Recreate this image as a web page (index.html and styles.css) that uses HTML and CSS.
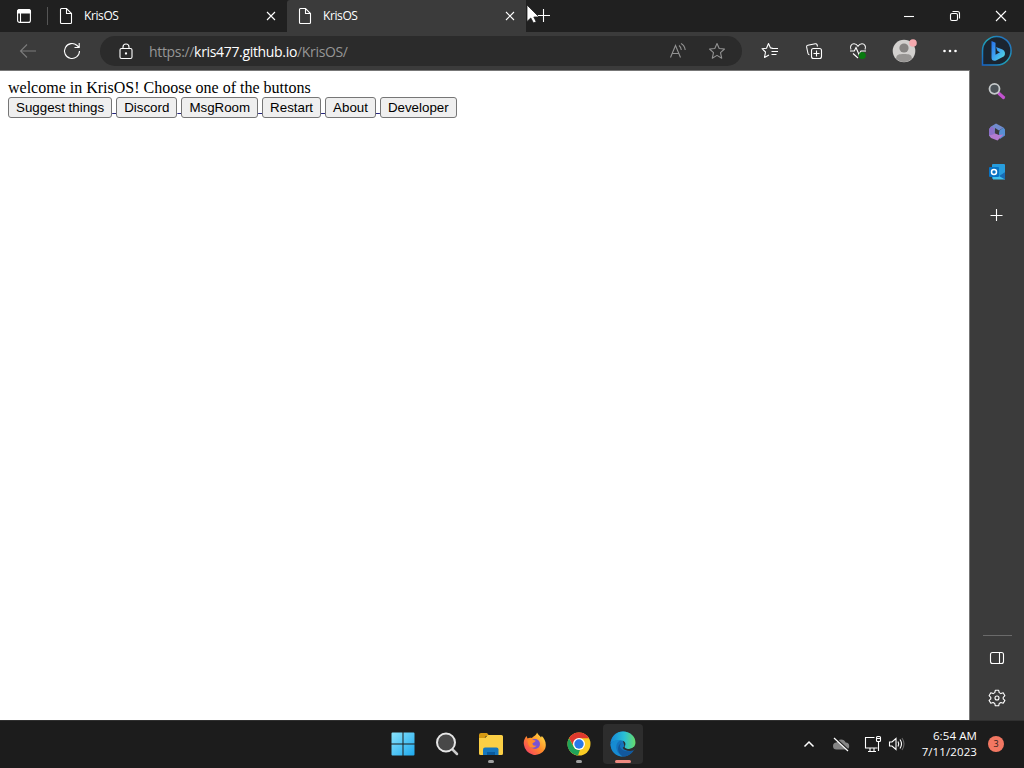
FILE: index.html
```html
<!DOCTYPE html>
<html lang="en">
<head>
    <meta charset="UTF-8">
    <meta name="viewport" content="width=device-width, initial-scale=1.0">
    <title>KrisOS</title>
    <link rel="stylesheet" href="styles.css">
</head>
<body>
    <div class="tabstrip">
        <div class="tab-menu">
            <svg class="icon" width="16" height="16" viewBox="0 0 16 16"><rect x="1.6" y="1.6" width="12.8" height="12.8" rx="2"/><path d="M1.5 3.5a2 2 0 0 1 2-2h9a2 2 0 0 1 2 2V5h-13z" fill="#fff"/><path d="M4.5 5v9"/></svg>
        </div>
        <div class="tab">
            <svg class="icon" width="14" height="18" viewBox="0 0 14 18"><path d="M1.5 2.5a1 1 0 0 1 1-1h5l5 5v9a1 1 0 0 1-1 1h-9a1 1 0 0 1-1-1zM7.5 1.5v5h5"/></svg>
            <span class="tab-title">KrisOS</span>
            <svg class="icon" width="10" height="10" viewBox="0 0 10 10"><path d="M1 1l8 8M9 1l-8 8"/></svg>
        </div>
        <div class="tab active">
            <svg class="icon" width="14" height="18" viewBox="0 0 14 18"><path d="M1.5 2.5a1 1 0 0 1 1-1h5l5 5v9a1 1 0 0 1-1 1h-9a1 1 0 0 1-1-1zM7.5 1.5v5h5"/></svg>
            <span class="tab-title">KrisOS</span>
            <svg class="icon" width="10" height="10" viewBox="0 0 10 10"><path d="M1 1l8 8M9 1l-8 8"/></svg>
        </div>
        <div class="new-tab">
            <svg class="icon" width="14" height="14" viewBox="0 0 14 14"><path d="M7.500 0v13M1 6.500h13"/></svg>
        </div>
        <div class="window-buttons">
            <svg class="icon" width="46" height="32" viewBox="0 0 46 32"><path d="M18 16.5h10"/></svg>
            <svg class="icon" width="46" height="32" viewBox="0 0 46 32"><rect x="18.5" y="13.5" width="7" height="7" rx="1.5"/><path d="M20.5 11.5h5a2 2 0 0 1 2 2v5"/></svg>
            <svg class="icon" width="46" height="32" viewBox="0 0 46 32"><path d="M18 11l10 10M28 11l-10 10"/></svg>
        </div>
    </div>

    <div class="main">
        <div class="view">
            <div class="toolbar">
                <div class="tool">
                    <svg class="icon back" width="18" height="16" viewBox="0 0 18 16"><path d="M17 8H1.5M8 1.5L1.5 8L8 14.5"/></svg>
                </div>
                <div class="tool">
                    <svg class="icon" width="18" height="18" viewBox="0 0 18 18"><path d="M16.5 9a7.5 7.5 0 1 1-2.4-5.5L16 5.3M16.2 1v4.5h-4.7"/></svg>
                </div>
                <div class="address">
                    <svg class="icon" width="14" height="17" viewBox="0 0 14 17"><rect x="1" y="5.5" width="12" height="10" rx="1.5"/><path d="M4 5.5V4a3 3 0 0 1 6 0v1.5"/><circle cx="7" cy="10.5" r=".6" fill="#fff"/></svg>
                    <span class="url">https://<b>kris477.github.io</b>/KrisOS/</span>
                    <svg class="icon dim" width="18" height="18" viewBox="0 0 18 18"><path d="M1.5 15.500L6.500 3.500L11.500 15.500M3.300 11.500h6.500M10 3.500q2 1.500 2.300 4.500M12 1.500q3.700 2 4.200 6.500"/></svg>
                    <svg class="icon dim" width="18" height="18" viewBox="0 0 18 18"><path d="M9 1.500l2.200 5 5.300.5-4 3.700 1.200 5.500L9 13.400l-4.700 2.800 1.200-5.500-4-3.700 5.300-.5z" stroke-linejoin="round"/></svg>
                </div>
                <div class="tool">
                    <svg class="icon" width="18" height="18" viewBox="0 0 18 18"><path d="M11.500 6L9.500 6L7.500 1.500L5.500 6.200L1 6.700L4.500 10L3.500 15.500L8 12.900M10.500 6.500H17M10.500 9.500h6.500M10.500 12.500h5" stroke-linejoin="round"/></svg>
                </div>
                <div class="tool">
                    <svg class="icon" width="18" height="18" viewBox="0 0 18 18"><rect x="6.500" y="6.500" width="10" height="10" rx="2"/><path d="M11.500 8.500v6M8.500 11.500h6M12.500 4.500l-.4-1.500a1.500 1.500 0 0 0-1.800-1.200L2.800 3.300A1.500 1.500 0 0 0 1.600 5L3 11.500a1.500 1.500 0 0 0 1.500 1.200"/></svg>
                </div>
                <div class="tool">
                    <svg class="icon" width="18" height="18" viewBox="0 0 18 18"><path d="M2 7.500C.5 4.500 2.500 1.800 5 1.800c1.900 0 3.200 1.200 4 2.400.8-1.200 2.100-2.400 4-2.400 2.500 0 4.500 2.700 3 5.700M1 9h4.300L7 5.500l3 7L12 9h5M4 11.500L9 16"/><circle cx="13.300" cy="13.400" r="3.500" fill="#087a10" stroke="none"/></svg>
                </div>
                <div class="tool profile">
                    <svg width="26" height="26" viewBox="0 0 26 26"><circle cx="13" cy="13" r="11.300" fill="#d2d0ce"/><circle cx="13" cy="10" r="4.600" fill="#858381"/><path d="M5 20.500C5.500 16.500 8 16 13 16s7.500.5 8 4.500a11 11 0 0 1-16 0z" fill="#979593"/><circle cx="22" cy="5" r="3.800" fill="#f4a9ae"/></svg>
                </div>
                <div class="tool more">
                    <svg width="16" height="4" viewBox="0 0 16 4" fill="#fff"><circle cx="3.500" cy="2" r="1.300"/><circle cx="9" cy="2" r="1.300"/><circle cx="14.500" cy="2" r="1.300"/></svg>
                </div>
            </div>

            <div class="page">
                welcome in KrisOS! Choose one of the buttons<br>
                <a href="#"><button>Suggest things</button> </a><a href="#"><button>Discord</button> </a><a href="#"><button>MsgRoom</button> </a><a href="#"><button>Restart</button> </a><a href="#"><button>About</button> </a><a href="#"><button>Developer</button></a>
            </div>
        </div>

        <div class="sidebar">
            <svg class="bing" width="32" height="32" viewBox="0 0 32 32">
                <defs>
                    <linearGradient id="ring" x1="0" y1="1" x2="1" y2="0"><stop offset="0" stop-color="#1764c8"/><stop offset=".5" stop-color="#20a4b5"/><stop offset="1" stop-color="#245fc0"/></linearGradient>
                    <linearGradient id="bee" x1="0" y1="0" x2="1" y2="1"><stop offset="0" stop-color="#2670e8"/><stop offset=".5" stop-color="#3fa5f2"/><stop offset="1" stop-color="#55e0d8"/></linearGradient>
                </defs>
                <path d="M1.500 30V16A14.300 14.300 0 1 1 16 30z" fill="#1b2530" stroke="url(#ring)" stroke-width="1.500"/>
                <path d="M10.500 6l4 1.700v12l4.500-2.500-2.500-1.200-1.500-4 6.500 2.500a4.300 4.300 0 0 1 1.200 7L15 25.500q-4.500 1-4.500-3z" fill="url(#bee)"/>
            </svg>
            <svg class="side-search" width="18" height="18" viewBox="0 0 18 18"><path d="M11 11.500l4.500 4" stroke="#c152cf" stroke-width="3.200" stroke-linecap="round"/><circle cx="6.500" cy="6.800" r="5" fill="#4c5358" stroke="#c5c9ca" stroke-width="1.800"/></svg>
            <svg class="side-office" width="18" height="18" viewBox="0 0 18 18"><path d="M3 3.500L8 .5l7.500 4-4.500 3-4-2.500-.5 8L1 13V6.500z" fill="#718bcd"/><path d="M15.500 4.500l1.500 2v6L12 16l-1-5.500.5-3z" fill="#578fd3"/><path d="M1 12.500l5.500-2.300L11 12l4.500-.5L9.500 17.500 3 15z" fill="#b47bcf"/><path d="M3 3.500L6.500 5v6L1 12.500V6z" fill="#8c70c8"/></svg>
            <svg class="side-outlook" width="18" height="18" viewBox="0 0 18 18"><rect x="4" y="1" width="13" height="15" rx="1" fill="#279ddd"/><path d="M5 9l6 4 6-4v7.500H5z" fill="#41c2ee"/><path d="M11 13l6-4v7.500z" fill="#176bb4"/><rect x="1" y="4" width="10" height="10" rx="1" fill="#0873c4"/><circle cx="6" cy="9" r="2.500" fill="none" stroke="#fff" stroke-width="1.500"/></svg>
            <svg class="icon side-add" width="14" height="14" viewBox="0 0 14 14"><path d="M6.500 1v12M.5 7.500h12"/></svg>
            <div class="side-bottom">
                <svg class="icon" width="16" height="14" viewBox="0 0 16 14"><rect x="1.500" y="1.500" width="13" height="11" rx="2"/><path d="M10.500 1.500v11"/></svg>
                <svg class="icon" width="18" height="18" viewBox="0 0 18 18"><path d="M7.300 1.300h3.400l.5 2.300 1.700 1 2.300-.8 1.700 2.900L15.200 8.300v1.600l1.700 1.500-1.700 2.900-2.300-.8-1.700 1-.5 2.300H7.300l-.5-2.300-1.700-1-2.300.8-1.700-2.900 1.700-1.500V8.300L1.100 6.700l1.700-2.900 2.300.8 1.700-1z" stroke-linejoin="round"/><circle cx="9" cy="9" r="2"/></svg>
            </div>
        </div>
    </div>

    <div class="taskbar">
        <div class="apps">
            <div class="app">
                <svg width="24" height="24" viewBox="0 0 24 24"><defs><linearGradient id="win" gradientUnits="userSpaceOnUse" x1="0" y1="0" x2="24" y2="24"><stop offset="0" stop-color="#8ce4fc"/><stop offset="1" stop-color="#1ba8ee"/></linearGradient></defs><path d="M.5 1.500a1 1 0 0 1 1-1h10v11H.5zM12.500.500h10a1 1 0 0 1 1 1v10h-11zM.5 12.500h11v11h-10a1 1 0 0 1-1-1zM12.500 12.500h11v10a1 1 0 0 1-1 1h-10z" fill="url(#win)"/></svg>
            </div>
            <div class="app">
                <svg width="24" height="24" viewBox="0 0 24 24"><path d="M17 17l5 5" stroke="#ccc" stroke-width="2.500" stroke-linecap="round"/><circle cx="11" cy="10.500" r="9" fill="#484848" stroke="#e5e5e5" stroke-width="2"/></svg>
            </div>
            <div class="app running">
                <svg width="26" height="24" viewBox="0 0 26 24"><path d="M1 3a2 2 0 0 1 2-2h6l2.500 3H8L6 7H1z" fill="#d69a12"/><path d="M1 6h6l3-3h13.500A1.500 1.500 0 0 1 25 4.500v17a1.500 1.500 0 0 1-1.500 1.500h-21A1.500 1.500 0 0 1 1 21.500z" fill="#fbcf45"/><path d="M5 23v-5.500a2 2 0 0 1 2-2h11.500a2 2 0 0 1 2 2V23z" fill="#1677be"/><path d="M9 23v-3h8v3z" fill="#095a9d"/></svg>
            </div>
            <div class="app">
                <svg width="24" height="24" viewBox="0 0 24 24"><defs><linearGradient id="fox" x1="1" y1="0" x2="0" y2="1"><stop offset="0" stop-color="#fff04c"/><stop offset=".5" stop-color="#ff8a28"/><stop offset="1" stop-color="#f52e72"/></linearGradient></defs><path d="M1 13C0 9 2 6 3.500 4l1 2.500C6 5.500 7.500 5.500 9 6c1.500-2 4-2 5-5.500 1 2 3 3.500 4 5l.8-1.500C22 7 24 12 22 17a11.200 11.200 0 0 1-21-4z" fill="url(#fox)"/><circle cx="12" cy="12" r="5" fill="#7953d2"/><path d="M4.500 8.500c2-1.500 4 0 6-.5l2 .5c0 2-3 2-3 3s1 3 4 2c-2 3-6 3-8-.5z" fill="#ff8b2b"/></svg>
            </div>
            <div class="app running">
                <svg width="24" height="24" viewBox="0 0 24 24"><circle cx="12" cy="12" r="11.500" fill="#f9cc24"/><path d="M2 6.200a11.500 11.500 0 0 1 20 0H12a6 6 0 0 0-5.500 7.500z" fill="#df392e"/><path d="M2 6.200l4.800 8.700A6 6 0 0 0 13 17.800L11 23.500A11.500 11.500 0 0 1 2 6.200z" fill="#1fa35a"/><circle cx="12" cy="12" r="6" fill="#fff"/><circle cx="12" cy="12" r="4.700" fill="#2879e8"/></svg>
            </div>
            <div class="app current">
                <svg width="26" height="26" viewBox="0 0 24 24"><defs><linearGradient id="edge"><stop offset="0" stop-color="#1687d7"/><stop offset=".55" stop-color="#29bfd6"/><stop offset="1" stop-color="#68dc69"/></linearGradient></defs><circle cx="12" cy="12" r="11.500" fill="#1473bd"/><path d="M12 9h12v7.500h-10z" fill="#2d2d2d"/><path d="M.5 11.500C1 5 6 .5 12 .5c7 0 11.500 5 11.500 10 0 4-3 6-6.500 6-2.500 0-4-1-3.500-2 2-3 0-6-4-6C5 8.500 1 10 .5 11.500z" fill="url(#edge)"/><path d="M9.500 8.500C3 12 6 21.500 12 23.500 6 24 .5 19 .5 12c2-3 5.500-4 9-3.500z" fill="#168bd2"/><path d="M10.500 11C6.500 15 12 20.500 21.800 18 19 22 16 23.500 12 23.500 6 20 6.500 13 10.500 11z" fill="#12589c"/><path d="M13.800 13.500c-1 1.500.2 3 3.200 3 2.300 0 4-.7 5-1.800l.8 1.800-1 1.500c-4 1-9 .2-10-2.500z" fill="#2d2d2d"/></svg>
            </div>
        </div>
        <div class="tray">
            <svg class="icon chevron" width="12" height="8" viewBox="0 0 12 8"><path d="M1.500 6.500L6 2l4.500 4.500" stroke-width="1.500"/></svg>
            <svg class="cloud" width="18" height="16" viewBox="0 0 18 16"><path d="M4.500 13.500a3.500 3.500 0 0 1 0-7 5 5 0 0 1 9.200 0 3.500 3.500 0 0 1 0 7z" fill="#858585"/><path d="M2.500 1.500l14 13" stroke="#1c1c1c" stroke-width="2"/><path d="M2 2l14 13" stroke="#fff" stroke-width="1.200"/></svg>
            <svg class="icon network" width="18" height="18" viewBox="0 0 18 18"><path d="M10.500 2.500h-9v10.500h12M4 16.500h8M6 13v3.500M10 13v3.500"/><rect x="12.500" y="1.500" width="4" height="5" rx="1"/><path d="M12.500 3.500h4M14.500 6.500v9.500"/></svg>
            <svg class="icon sound" width="18" height="16" viewBox="0 0 18 16"><path d="M1.500 6v4h2.500l4 3.500v-11L4 6zM10 5.500q1.500 2.500 0 5M12 3.500q3 4.500 0 9"/><path d="M14 2q4 6 0 12" stroke="#666"/></svg>
            <div class="clock">6:54 AM<br>7/11/2023</div>
            <div class="badge">3</div>
        </div>
    </div>

    <svg class="cursor" width="14" height="20" viewBox="0 0 14 20"><path d="M1 1v16.500l3.800-3.500 2.700 5 2.700-1.300L7.800 13H13z" fill="#fff" stroke="#222" stroke-width=".8"/></svg>
</body>
</html>
```
FILE: styles.css
```css
body {
    margin: 0;
    height: 768px;
    display: flex;
    flex-direction: column;
    overflow: hidden;
    font-family: "Open Sans", "Noto Sans", sans-serif;
    color: #fff;
    background: #202020;
}
svg {
    display: block;
    flex: none;
}
.icon {
    fill: none;
    stroke: #fff;
    stroke-width: 1.1;
}

/* tabs */
.tabstrip {
    height: 32px;
    display: flex;
    background: #202020;
}
.tab-menu {
    width: 47px;
    display: flex;
    align-items: center;
    justify-content: center;
    margin: 7px 0;
    border-right: 1px solid #555;
}
.tab {
    width: 239px;
    box-sizing: border-box;
    display: flex;
    align-items: center;
    padding: 0 11px;
}
.tab.active {
    background: #3b3b3b;
    border-radius: 3px 0 0 0;
}
.tab-title {
    flex: 1;
    margin: -1px 0 0 11px;
    font-size: 12px;
    letter-spacing: -0.4px;
}
.new-tab {
    display: flex;
    align-items: center;
    margin-left: 10px;
}
.window-buttons {
    display: flex;
    margin-left: auto;
}

/* toolbar */
.main {
    height: 688px;
    display: flex;
}
.view {
    width: 970px;
    display: flex;
    flex-direction: column;
}
.toolbar {
    height: 38px;
    box-sizing: border-box;
    display: flex;
    align-items: center;
    padding-left: 6px;
    background: #3b3b3b;
}
.tool {
    width: 44px;
    flex: none;
    display: flex;
    justify-content: center;
}
.tool.profile {
    width: 48px;
}
.tool.more {
    width: 42px;
}
.back {
    stroke: #7c7c7c;
}
.address {
    width: 642px;
    height: 30px;
    flex: none;
    box-sizing: border-box;
    display: flex;
    align-items: center;
    margin: 0 6px;
    padding: 0 16px 0 19px;
    border-radius: 15px;
    background: #2b2b2b;
}
.url {
    flex: 1;
    margin-left: 16px;
    font-size: 14px;
    letter-spacing: -0.33px;
    color: #969696;
}
.url b {
    font-weight: normal;
    color: #fff;
}
.dim {
    stroke: #929292;
    margin-left: 21px;
}

/* page content */
.page {
    flex: 1;
    padding: 8px;
    border-top: 1px solid #777;
    border-right: 1px solid #777;
    background: #fff;
    color: #000;
    font: 16px "Liberation Serif", serif;
}
.page a {
    color: #26267e;
}
.page button {
    height: 21px;
    padding: 1px 7px;
    border: 1px solid #767676;
    border-radius: 3px;
    background: #efefef;
    color: #000;
    font: 13.333px "Liberation Sans", sans-serif;
}

/* sidebar */
.sidebar {
    width: 54px;
    display: flex;
    flex-direction: column;
    align-items: center;
    background: #3b3b3b;
}
.bing {
    margin-top: 3px;
}
.side-search {
    margin-top: 15px;
}
.side-office {
    margin-top: 23px;
}
.side-outlook {
    margin-top: 22px;
}
.side-add {
    margin-top: 27px;
}
.side-bottom {
    width: 29px;
    display: flex;
    flex-direction: column;
    align-items: center;
    gap: 24px;
    margin-top: auto;
    padding: 15px 0 13px;
    border-top: 1px solid #6a6a6a;
}

/* taskbar */
.taskbar {
    height: 48px;
    box-sizing: border-box;
    display: flex;
    padding-bottom: 1px;
    border-top: 1px solid #303030;
    background: #1c1c1c;
}
.apps {
    display: flex;
    align-items: center;
    gap: 4px;
    margin-left: 383px;
}
.app {
    position: relative;
    width: 40px;
    height: 40px;
    display: flex;
    align-items: center;
    justify-content: center;
}
.running::after,
.current::after {
    content: "";
    position: absolute;
    bottom: 1px;
    width: 6px;
    height: 3px;
    border-radius: 2px;
    background: #a0a0a0;
}
.current {
    border-radius: 4px;
    background: #2d2d2d;
}
.current::after {
    width: 16px;
    background: #ee8980;
}
.tray {
    display: flex;
    align-items: center;
    margin-left: auto;
    padding-right: 20px;
}
.cloud {
    margin-left: 17px;
}
.network {
    margin-left: 14px;
}
.sound {
    margin-left: 6px;
}
.clock {
    width: 71px;
    font-size: 11.5px;
    line-height: 16px;
    letter-spacing: 0.1px;
    text-align: right;
}
.badge {
    width: 16px;
    height: 16px;
    margin-left: 11px;
    border-radius: 50%;
    background: #f27762;
    color: #2b1b18;
    font-size: 9px;
    line-height: 16px;
    text-align: center;
}

/* mouse pointer */
.cursor {
    position: absolute;
    left: 526px;
    top: 4px;
}
```
